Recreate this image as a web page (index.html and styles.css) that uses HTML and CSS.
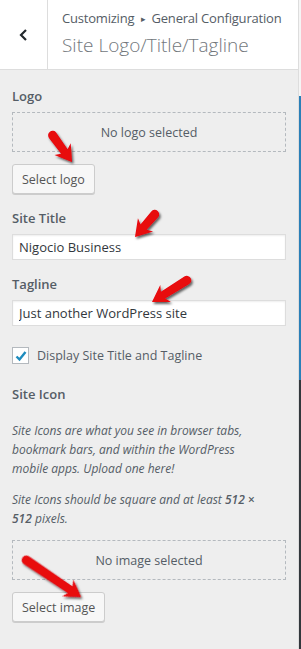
FILE: index.html
```html
<!DOCTYPE html>
<html lang="en">
<head>
  <meta charset="UTF-8" />
  <title>Site Logo/Title/Tagline</title>
  <link rel="stylesheet" href="styles.css">
</head>
<body>

  <div class="layout">
    <aside class="panel">

      <header class="panel-head">
        <button class="back" aria-label="Back">
          <svg width="12" height="14" viewBox="0 0 12 14"><path d="M8 2 L3 7 L8 12" fill="none" stroke="#23282d" stroke-width="2.2"/></svg>
        </button>
        <div class="head-titles">
          <span class="crumbs">Customizing <span class="sep">&#9656;</span> General Configuration</span>
          <h1>Site Logo/Title/Tagline</h1>
        </div>
      </header>

      <section class="controls">
        <div class="control">
          <span class="label">Logo</span>
          <div class="placeholder">No logo selected</div>
          <button class="btn">Select logo</button>
        </div>

        <div class="control">
          <span class="label">Site Title</span>
          <input class="field" type="text" value="Nigocio Business">
        </div>

        <div class="control">
          <span class="label">Tagline</span>
          <input class="field" type="text" value="Just another WordPress site">
        </div>

        <label class="check">
          <span class="box">
            <svg width="14" height="14" viewBox="0 0 14 14"><path d="M2.5 7.5 L5.5 10.5 L11.5 3" fill="none" stroke="#1e8cbe" stroke-width="2.4"/></svg>
          </span>
          Display Site Title and Tagline
        </label>

        <div class="control icon-control">
          <span class="label">Site Icon</span>
          <p class="desc">Site Icons are what you see in browser tabs, bookmark bars, and within the WordPress mobile apps. Upload one here!</p>
          <p class="desc">Site Icons should be square and at least <strong>512 &times;</strong> <strong>512</strong> pixels.</p>
          <div class="placeholder">No image selected</div>
          <button class="btn">Select image</button>
        </div>
      </section>

      <!-- annotation arrows: each drawn pointing right with its tip at 0,0 -->
      <svg class="arrows" width="299" height="649" viewBox="0 0 299 649">
        <defs>
          <filter id="shadow" x="-40%" y="-40%" width="180%" height="180%">
            <feDropShadow dx="1.5" dy="2" stdDeviation="1.3" flood-color="#000" flood-opacity="0.6"/>
          </filter>
        </defs>
        <g filter="url(#shadow)" fill="#e8070b">
          <g transform="translate(72,162) rotate(54)">
            <path d="M0 0 L-16 -10 L-13 -4 L-33 -4.5 A4.5 4.5 0 0 0 -33 4.5 L-13 4 L-16 10 Z"/>
          </g>
          <g transform="translate(135,237) rotate(131)">
            <path d="M0 0 L-16 -10 L-13 -4 L-30 -4.5 A4.5 4.5 0 0 0 -30 4.5 L-13 4 L-16 10 Z"/>
          </g>
          <g transform="translate(152,302) rotate(148)">
            <path d="M0 0 L-16 -10 L-13 -4 L-41 -4.5 A4.5 4.5 0 0 0 -41 4.5 L-13 4 L-16 10 Z"/>
          </g>
          <g transform="translate(81,597) rotate(34)">
            <path d="M0 0 L-16 -10 L-13 -4 L-66 -4.5 A4.5 4.5 0 0 0 -66 4.5 L-13 4 L-16 10 Z"/>
          </g>
        </g>
      </svg>
    </aside>

    <div class="preview"></div>
  </div>

</body>
</html>
```

FILE: styles.css
```css
body {
  margin: 0;
  font-family: "Open Sans", "Noto Sans", sans-serif;
  color: #555d66;
  background-color: #eee;
}

.layout {
  display: flex;
  height: 649px;
}

.panel {
  position: relative;
  width: 298px;
  background-color: #eee;
  border-right: 1px solid #ddd;
}

.preview {
  flex: 1;
  background: linear-gradient(#f5f5f5 0, #f5f5f5 96px, #2a7fb8 96px, #2a7fb8 380px, #32373c 380px);
}

.panel-head {
  display: flex;
  height: 69px;
  background-color: #fff;
  border-bottom: 1px solid #ddd;
}

.back {
  width: 48px;
  padding: 0;
  border: none;
  border-right: 1px solid #ddd;
  background: #fff;
  display: flex;
  align-items: center;
  justify-content: center;
}

.head-titles {
  padding: 8px 0 0 14px;
}

.crumbs {
  display: block;
  font-size: 13px;
  line-height: 20px;
  color: #555d66;
  letter-spacing: -0.2px;
}

.crumbs .sep {
  font-size: 9px;
  margin: 0 3px;
  vertical-align: 1px;
}

.head-titles h1 {
  margin: 3px 0 0;
  font-size: 19px;
  font-weight: 300;
  line-height: 26px;
  color: #72777c;
}

.controls {
  padding: 16px 12px 0;
}

.control {
  margin-bottom: 14px;
}

.label {
  display: block;
  font-size: 13px;
  font-weight: 600;
  line-height: 20px;
  margin-bottom: 6px;
}

.placeholder {
  height: 38px;
  border: 1px dashed #b4b9be;
  display: flex;
  align-items: center;
  justify-content: center;
  font-size: 12.5px;
  color: #555d66;
  margin-bottom: 12px;
}

.btn {
  height: 30px;
  padding: 0 9px;
  font-family: inherit;
  font-size: 12.5px;
  color: #555;
  background-color: #f7f7f7;
  border: 1px solid #ccc;
  border-radius: 3px;
  box-shadow: 0 1px 0 #ccc;
}

.field {
  display: block;
  box-sizing: border-box;
  width: 100%;
  height: 26px;
  padding: 0 6px;
  font-family: inherit;
  font-size: 13px;
  color: #32373c;
  background-color: #fff;
  border: 1px solid #ddd;
  box-shadow: inset 0 1px 2px rgba(0, 0, 0, 0.07);
}

.check {
  display: flex;
  align-items: center;
  gap: 8px;
  font-size: 12.5px;
  margin: 21px 0 20px;
}

.box {
  width: 15px;
  height: 15px;
  background-color: #fff;
  border: 1px solid #b4b9be;
  display: flex;
  align-items: center;
  justify-content: center;
}

.desc {
  max-width: 262px;
  margin: 0 0 12px;
  font-size: 12px;
  font-style: italic;
  line-height: 19px;
}

.desc strong {
  font-weight: 600;
}

.icon-control .label {
  margin-bottom: 17px;
}

.arrows {
  position: absolute;
  top: 0;
  left: 0;
  pointer-events: none;
}
```
